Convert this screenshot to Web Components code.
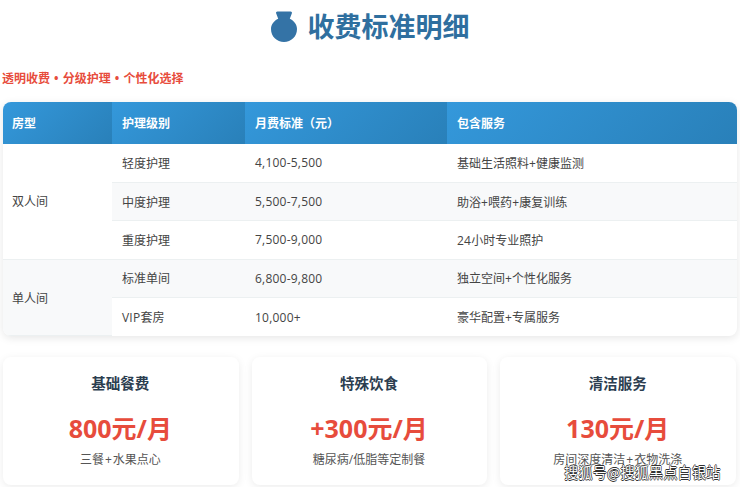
<!DOCTYPE html>
<html lang="zh"><head><meta charset="utf-8"><style>
html,body{margin:0;padding:0;background:#fff;overflow:hidden;height:487px}
body{font-family:"Open Sans","Noto Sans CJK SC",sans-serif;color:#333}
</style></head><body>
<fee-page>
<fee-header slot="head">收费标准明细</fee-header>
<fee-table slot="table"></fee-table>
<fee-card slot="cards" name="基础餐费" price="800元/月">三餐<fee-plus>+</fee-plus>水果点心</fee-card>
<fee-card slot="cards" name="特殊饮食" price="+300元/月">糖尿病/低脂等定制餐</fee-card>
<fee-card slot="cards" name="清洁服务" price="130元/月">房间深度清洁<fee-plus>+</fee-plus>衣物洗涤</fee-card>
</fee-page>
<script>
class FeePlus extends HTMLElement{constructor(){super();this.attachShadow({mode:'open'}).innerHTML=`<style>:host{display:inline;padding:0 1px}</style><slot></slot>`}}
class FeePage extends HTMLElement{constructor(){super();this.attachShadow({mode:'open'}).innerHTML=`<style>
:host{display:block;position:relative;width:740px;height:487px;overflow:hidden;box-sizing:border-box;padding:0 3px}
.sub{margin:20px 0 0 -1px;font-size:12px;font-weight:700;color:#e74c3c;line-height:18px;height:18px;word-spacing:1px}
.t{margin-top:14px}
.cards{display:grid;grid-template-columns:repeat(3,235.7px);gap:13px;margin-top:21px}
.wm{position:absolute;left:564px;top:463px;font-size:14.3px;line-height:18px;color:#fff;white-space:nowrap;font-family:"Noto Sans CJK SC",sans-serif;text-shadow:.6px 0 0 #333,-.6px 0 0 #333,0 .6px 0 #333,0 -.6px 0 #333}
</style>
<slot name="head"></slot>
<p class="sub">透明收费 • 分级护理 • 个性化选择</p>
<div class="t"><slot name="table"></slot></div>
<div class="cards"><slot name="cards"></slot></div>
<div class="wm">搜狐号@搜狐黑点白银站</div>`}}
class FeeHeader extends HTMLElement{constructor(){super();this.attachShadow({mode:'open'}).innerHTML=`<style>
:host{display:flex;align-items:center;justify-content:center;gap:11px;height:50px;padding-top:4px;box-sizing:border-box;color:#2f6f9f;font-size:27px;font-weight:700;line-height:36px}
svg{display:block;width:26px;height:31px;margin-top:-1px}
</style><svg viewBox="0 0 26 31"><path fill="#3473a6" d="M6.500 0.500H19.500C20.800 0.500 21.300 1.500 20.800 2.600L18.800 7.800C23 9.800 26 13.600 26 18C26 25.500 20.200 31 13 31C5.800 31 0 25.500 0 18C0 13.600 3 9.800 7.200 7.800L5.200 2.600C4.700 1.500 5.200 0.500 6.500 0.500Z"/></svg><span><slot></slot></span>`}}
const rows=[
['双人间',3,'轻度护理','4,100-5,500','基础生活照料+健康监测'],
[null,0,'中度护理','5,500-7,500','助浴+喂药+康复训练'],
[null,0,'重度护理','7,500-9,000','24小时专业照护'],
['单人间',2,'标准单间','6,800-9,800','独立空间+个性化服务'],
[null,0,'VIP套房','10,000+','豪华配置+专属服务']];
const fmt=s=>s.replace(/[0-9,\-+VIP]+/g,m=>`<span class="n">${m}</span>`);
class FeeTable extends HTMLElement{constructor(){super();this.attachShadow({mode:'open'}).innerHTML=`<style>
:host{display:block;border-radius:8px;overflow:hidden;box-shadow:0 2px 8px rgba(0,0,0,.1);background:#fff}
table{width:100%;border-collapse:collapse;table-layout:fixed;font-size:12px;color:#444}
th{height:42px;padding:0 10px;text-align:left;font-weight:700;color:#fff;background:linear-gradient(135deg,#3498db,#2980b9);box-sizing:border-box}
td{height:38.4px;padding:0 10px;box-sizing:border-box;border-bottom:1px solid #ecf0f1}
th:first-child,td[rowspan]{padding-left:9px}
tr:last-child td{border-bottom:0}
tr:nth-child(even) td{background:#f8f9fa}
.n{letter-spacing:.22px}
</style><table><colgroup><col style="width:109px"><col style="width:133px"><col style="width:202px"><col></colgroup>
<thead><tr><th>房型</th><th>护理级别</th><th>月费标准（元）</th><th>包含服务</th></tr></thead>
<tbody>${rows.map(r=>`<tr>${r[0]?`<td rowspan="${r[1]}">${r[0]}</td>`:''}<td>${fmt(r[2])}</td><td>${fmt(r[3])}</td><td>${fmt(r[4])}</td></tr>`).join('')}</tbody></table>`}}
class FeeCard extends HTMLElement{constructor(){super();this.attachShadow({mode:'open'}).innerHTML=`<style>
:host{display:block;height:128px;box-sizing:border-box;background:#fff;border-radius:8px;box-shadow:0 2px 8px rgba(0,0,0,.08);text-align:center;padding:17px 1px 0 0}
h3{margin:0;font-size:14.5px;font-weight:700;color:#2c3e50;line-height:20px}
.p{margin-top:16px;font-size:25px;font-weight:700;color:#e74c3c;line-height:36px}
.d{margin-top:5px;font-size:12px;color:#555;line-height:18px}
</style><h3>${this.getAttribute('name')}</h3><div class="p">${this.getAttribute('price')}</div><div class="d"><slot></slot></div>`}}
customElements.define('fee-plus',FeePlus);customElements.define('fee-page',FeePage);customElements.define('fee-header',FeeHeader);customElements.define('fee-table',FeeTable);customElements.define('fee-card',FeeCard);
</script></body></html>
